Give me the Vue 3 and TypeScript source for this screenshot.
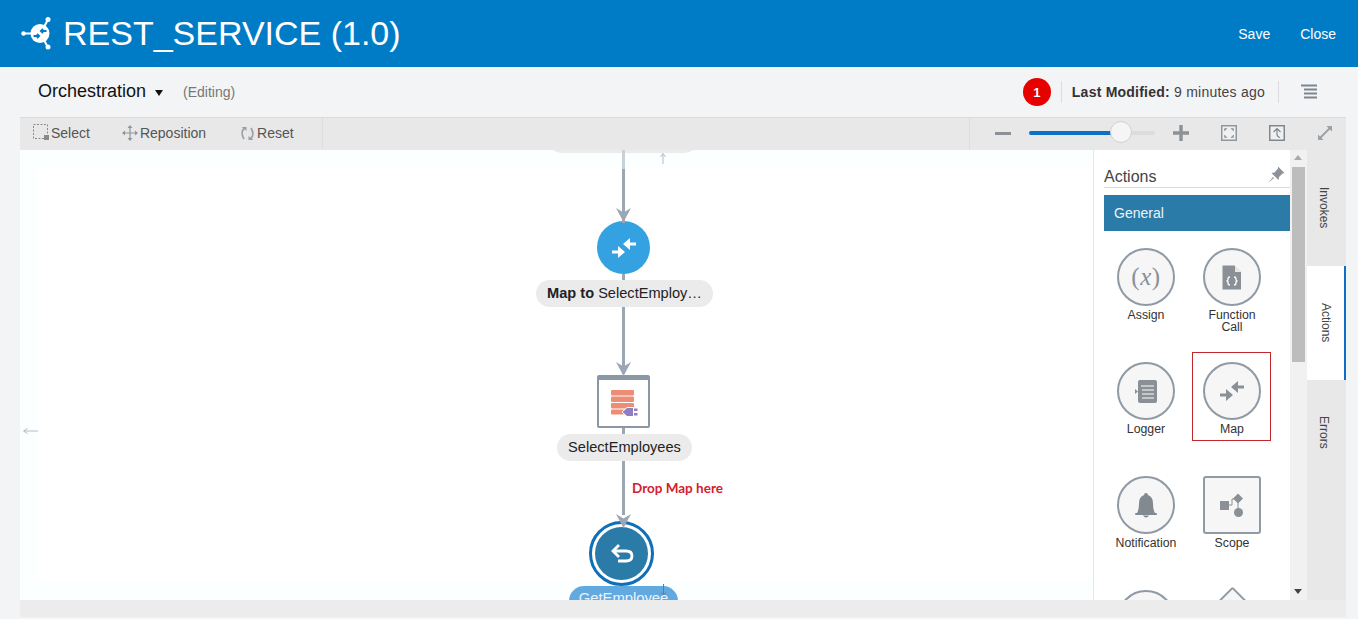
<script setup lang="ts">
interface Tool { label: string[]; icon: string; shape?: string; selected?: boolean }
const tools: Tool[] = [
  { label: ['Assign'], icon: 'assign' },
  { label: ['Function', 'Call'], icon: 'func' },
  { label: ['Logger'], icon: 'logger' },
  { label: ['Map'], icon: 'map', selected: true },
  { label: ['Notification'], icon: 'bell' },
  { label: ['Scope'], icon: 'scope', shape: 'square' },
  { label: [], icon: 'none' },
  { label: [], icon: 'none', shape: 'diamond' },
]
const tabs = [
  { name: 'Invokes', active: false },
  { name: 'Actions', active: true },
  { name: 'Errors', active: false },
]
</script>

<template>
  <div class="app">
    <header class="top">
      <div class="brand">
        <svg class="logo" width="34" height="34" viewBox="0 0 34 34">
          <circle cx="3.500" cy="16.500" r="2.200" fill="#fff" />
          <path d="M3 16.500h10M24 10l4-7.500M24 23l4 7.500" stroke="#fff" stroke-width="2" fill="none" />
          <circle cx="28" cy="2.500" r="2.500" fill="#fff" />
          <circle cx="28" cy="30" r="2.500" fill="#fff" />
          <circle cx="20" cy="16.500" r="9.500" fill="#fff" />
          <path d="M13.500 19h5.500M17 16.800l2.200 2.200-2.200 2.200M26.500 14H21M23 11.800L20.800 14l2.200 2.200" stroke="#007cc7" stroke-width="1.800" fill="none" />
        </svg>
        <span class="title">REST_SERVICE (1.0)</span>
      </div>
      <nav class="top-actions"><a>Save</a><a>Close</a></nav>
    </header>

    <div class="subbar">
      <div class="sub-left">
        <span class="mode">Orchestration</span>
        <span class="caret"></span>
        <span class="editing">(Editing)</span>
      </div>
      <div class="sub-right">
        <span class="badge">1</span>
        <span class="modified"><b>Last Modified:</b> 9 minutes ago</span>
        <svg class="menu" width="18" height="16" viewBox="0 0 18 16">
          <path d="M1 1.500h16M4 5.500h13M4 9.500h13M4 13.500h13" stroke="#7d868e" stroke-width="1.800" />
        </svg>
      </div>
    </div>

    <div class="workspace">
      <div class="toolbar">
        <div class="tools-left">
          <span class="tbtn select">
            <svg width="18" height="18" viewBox="0 0 18 18">
              <rect x="0.500" y="0.500" width="14" height="14" fill="none" stroke="#8a8a8a" stroke-dasharray="2 1.500" />
              <rect x="11" y="11" width="5" height="5" fill="#8a8a8a" />
            </svg>Select</span>
          <span class="tbtn repos">
            <svg width="16" height="16" viewBox="0 0 16 16">
              <path d="M8 1v14M1 8h14" stroke="#8c959d" stroke-width="1.200" />
              <path d="M8 0l2.500 3h-5zM8 16l2.500-3h-5zM0 8l3-2.500v5zM16 8l-3-2.500v5z" fill="#8c959d" />
            </svg>Reposition</span>
          <span class="tbtn reset">
            <svg width="15" height="15" viewBox="0 0 15 15">
              <path d="M4.500 2C1.500 4.500 1.500 9 4 13M10.500 13c3-2.500 3-7 .5-11" fill="none" stroke="#99a1a8" stroke-width="1.800" />
              <path d="M1.500 1h5v4zM13.500 14h-5v-4z" fill="#99a1a8" />
            </svg>Reset</span>
        </div>
        <div class="tools-right">
          <span class="minus"></span>
          <div class="slider"><span class="fill"></span><span class="thumb"></span></div>
          <svg class="plus" width="16" height="16" viewBox="0 0 16 16">
            <path d="M8 0v16M0 8h16" stroke="#8b9197" stroke-width="3.400" />
          </svg>
          <svg class="tico fit" width="16" height="16" viewBox="0 0 16 16">
            <rect x="0.750" y="0.750" width="14.500" height="14.500" fill="#f0f0f0" stroke="#8f979e" stroke-width="1.500" />
            <path d="M3.500 3.500h2.500L3.500 6zM12.500 3.500H10L12.500 6zM3.500 12.500h2.500L3.500 10zM12.500 12.500H10L12.500 10z" fill="#8f979e" stroke="#8f979e" stroke-width=".6" />
          </svg>
          <svg class="tico up" width="16" height="16" viewBox="0 0 16 16">
            <rect x="0.750" y="0.750" width="14.500" height="14.500" fill="#f0f0f0" stroke="#80888f" stroke-width="1.500" />
            <path d="M8 3.500L4.500 7M8 3.500L11.500 7M8 3.500V9q0 3 3 3.500" fill="none" stroke="#80888f" stroke-width="1.200" />
          </svg>
          <svg class="tico expand" width="16" height="16" viewBox="0 0 16 16">
            <path d="M3 13l10-10" stroke="#9aa1a7" stroke-width="2" />
            <path d="M9.500 1h5.500v5.500zM1 9.500V15h5.500z" fill="#9aa1a7" />
          </svg>
        </div>
      </div>

      <div class="main">
        <div class="canvas">
          <div class="tint"></div>
          <svg class="edges" width="1073" height="450" viewBox="0 0 1073 450">
            <path d="M603.500 0v19" stroke="#c9d0d6" stroke-width="3" />
            <path d="M603.500 19v54M603.500 124v6M603.500 157v67M603.500 278v6M603.500 311v54" stroke="#9ba7b3" stroke-width="3" fill="none" />
            <path d="M596 58l7.500 4.500L611 58l-7.500 14z" fill="#9ba7b3" />
            <path d="M596 212l7.500 4.500L611 212l-7.500 14z" fill="#9ba7b3" />
            <path d="M596 364l7.500 4.500L611 364l-7.500 14z" fill="#9ba7b3" />
            <path d="M643 14V4M640.500 7L643 3.500 645.500 7" stroke="#b5bcc2" fill="none" />
            <path d="M18 281H4M7.500 278.500L3.500 281 7.500 283.500" stroke="#b5bcc2" fill="none" />
          </svg>

          <div class="pill first"></div>

          <div class="node map-node">
            <svg width="26" height="26" viewBox="0 0 26 26">
              <path d="M1 15.500h7v3H1zM7 11l7 6-7 6z" fill="#fff" />
              <path d="M25 7.500h-7v3h7zM19 3l-7 6 7 6z" fill="#fff" />
            </svg>
          </div>
          <div class="pill map-pill"><b>Map to</b> SelectEmploy…</div>

          <div class="db-node">
            <svg width="32" height="30" viewBox="0 0 32 30">
              <rect x="3" y="1" width="23" height="5.500" rx="1" fill="#ec8e76" />
              <rect x="3" y="7.500" width="23" height="5.500" rx="1" fill="#ec8e76" />
              <rect x="3" y="14" width="23" height="5.500" rx="1" fill="#ec8e76" />
              <rect x="3" y="20.500" width="13" height="5" rx="1" fill="#ec8e76" />
              <path d="M14 23l5-4.500h6.500v9H19z" fill="#8f7fc1" stroke="#fff" stroke-width="1" />
              <rect x="26" y="19.500" width="3.500" height="2.500" fill="#8f7fc1" />
              <rect x="26" y="24" width="3.500" height="2.500" fill="#8f7fc1" />
            </svg>
          </div>
          <div class="pill select-pill">SelectEmployees</div>

          <div class="drop">Drop Map here</div>

          <div class="return-ring">
            <div class="return-node">
              <svg width="24" height="20" viewBox="0 0 24 20">
                <path d="M3 7h13q6 0 6 5t-6 5H8" fill="none" stroke="#fff" stroke-width="2.800" />
                <path d="M9 1L3 7l6 6" fill="none" stroke="#fff" stroke-width="2.800" />
              </svg>
            </div>
          </div>
          <div class="pill get-pill">GetEmployee</div>
          <svg class="down" width="7" height="12" viewBox="0 0 7 12">
            <path d="M3.500 0v11M1 8.500L3.500 11 6 8.500" fill="none" stroke="#5d7c9b" />
          </svg>
        </div>

        <aside class="panel">
          <div class="panel-head">
            <span>Actions</span>
            <svg width="17" height="17" viewBox="0 0 17 17">
              <path d="M10 0.500l6.500 6.500-2 .5-3.500 3.500-.5 3-7-7 3-.5L10 2.500z" fill="#8c9298" />
              <path d="M5 11l-4.500 5.500L6 12z" fill="#8c9298" />
            </svg>
          </div>
          <div class="general">General</div>
          <div class="grid">
            <div v-for="t in tools" :key="t.icon + t.label.join() + t.shape" class="tool" :class="{ selected: t.selected }">
              <div class="shape" :class="t.shape || 'circle'">
                <span v-if="t.icon === 'assign'" class="assign">(<i>x</i>)</span>
                <svg v-else-if="t.icon === 'func'" width="20" height="25" viewBox="0 0 20 25">
                  <path d="M.5.500h12l6.500 6.500v17.500H.5z" fill="#8a9096" />
                  <path d="M13 .5v6.500h6.500z" fill="#e6e6e6" />
                  <path d="M8 12q-2 0-2 2v1l-1 1 1 1v1q0 2 2 2M12 12q2 0 2 2v1l1 1-1 1v1q0 2-2 2" fill="none" stroke="#fff" stroke-width="1.300" />
                </svg>
                <svg v-else-if="t.icon === 'logger'" width="22" height="23" viewBox="0 0 22 23">
                  <rect x="3" y="0" width="19" height="23" rx="2" fill="#8a9096" />
                  <path d="M6 6h13M7 10h12M7 14h12M7 18h12" stroke="#fff" stroke-width="1.200" />
                  <path d="M0 9l3 2.500L0 14z" fill="#8a9096" />
                </svg>
                <svg v-else-if="t.icon === 'map'" width="26" height="26" viewBox="0 0 26 26">
                  <path d="M1 15.500h7v3H1zM7 11l7 6-7 6z" fill="#8a9096" />
                  <path d="M25 7.500h-7v3h7zM19 3l-7 6 7 6z" fill="#8a9096" />
                </svg>
                <svg v-else-if="t.icon === 'bell'" width="22" height="25" viewBox="0 0 22 25">
                  <path d="M11 0q2 0 2 2 5 2 5 8 0 7 2 10H2q2-3 2-10 0-6 5-8 0-2 2-2z" fill="#828a91" />
                  <rect x="0" y="20" width="22" height="2" rx="1" fill="#828a91" />
                  <path d="M8 22.500h6q-1 2-3 2t-3-2z" fill="#828a91" />
                </svg>
                <svg v-else-if="t.icon === 'scope'" width="25" height="25" viewBox="0 0 25 25">
                  <rect x="0" y="8" width="9" height="9" fill="#8a9096" />
                  <path d="M9 12h3V6h6M18 8v10" fill="none" stroke="#8a9096" stroke-width="1" />
                  <path d="M18 0.500l5 5-5 5-5-5z" fill="#8a9096" />
                  <circle cx="18.500" cy="19.500" r="4.500" fill="#8a9096" />
                </svg>
              </div>
              <div class="lbl"><div v-for="l in t.label" :key="l">{{ l }}</div></div>
            </div>
          </div>
        </aside>

        <div class="scroll">
          <span class="s-up"></span>
          <span class="s-thumb"></span>
          <span class="s-down"></span>
        </div>

        <div class="tabs">
          <div v-for="t in tabs" :key="t.name" class="tab" :class="[{ active: t.active }, 'tab-' + t.name.toLowerCase()]">
            <span>{{ t.name }}</span>
          </div>
        </div>
      </div>
      <div class="bottom"></div>
    </div>
  </div>
</template>

<style scoped>
.app { width: 1358px; height: 619px; overflow: hidden; background: #f3f4f6; font-family: "Liberation Sans", Arial, sans-serif; display: flex; flex-direction: column; color: #222; }
.top { height: 67px; flex: none; background: #007cc7; display: flex; justify-content: space-between; align-items: center; padding: 0 22px 0 20px; color: #fff; }
.brand { display: flex; align-items: center; gap: 9px; }
.title { font-size: 34px; }
.top-actions { display: flex; gap: 30px; font-size: 14px; }

.subbar { height: 50px; box-sizing: border-box; flex: none; display: flex; justify-content: space-between; align-items: center; padding: 0 40px 2px 38px; }
.sub-left { display: flex; align-items: center; }
.mode { font-size: 18px; color: #111; }
.caret { width: 0; height: 0; margin: 3px 0 0 9px; border-left: 4.500px solid transparent; border-right: 4.500px solid transparent; border-top: 6px solid #111; }
.editing { margin-left: 20px; font-size: 14px; color: #777; margin-top: 2px; }
.sub-right { display: flex; align-items: center; margin-top: 2px; }
.badge { width: 28px; height: 28px; border-radius: 50%; background: #e60000; color: #fff; font-size: 13px; font-weight: bold; display: flex; align-items: center; justify-content: center; }
.modified { margin-left: 10px; padding-left: 10px; border-left: 1px solid #dcdcdc; font-size: 14px; line-height: 22px; color: #444; padding-right: 13px; border-right: 1px solid #dcdcdc; letter-spacing: 0.23px; }
.modified b { color: #333; }
.menu { margin-left: 21px; }

.workspace { margin-left: 20px; width: 1326px; display: flex; flex-direction: column; }
.toolbar { height: 33px; flex: none; box-sizing: border-box; border-top: 1px solid #dcdbd6; background: #e8e8e8; display: flex; justify-content: space-between; align-items: center; }
.tools-left { display: flex; align-items: center; height: 100%; box-sizing: border-box; padding-bottom: 2px; width: 303px; border-right: 1px solid #dedede; }
.tbtn { display: inline-flex; align-items: center; font-size: 14px; color: #555; }
.select { margin-left: 13px; }
.repos { margin-left: 32px; }
.repos svg { margin-right: 2px; }
.reset { margin-left: 34px; }
.reset svg { margin-right: 2px; }
.tools-right { display: flex; align-items: center; height: 100%; padding-bottom: 2px; width: 377px; border-left: 1px solid #dedede; box-sizing: border-box; }
.minus { width: 16px; height: 3px; background: #8b9197; margin-left: 25px; }
.slider { position: relative; width: 126px; height: 4px; border-radius: 2px; background: #dcdcdc; margin-left: 18px; }
.fill { position: absolute; left: 0; top: 0; height: 4px; width: 84px; background: #0f6fc6; border-radius: 2px; }
.thumb { position: absolute; left: 81px; top: -10px; width: 22px; height: 22px; border-radius: 50%; background: #f5f5f5; border: 1px solid #d0d0d0; box-sizing: border-box; }
.plus { margin-left: 18px; }
.fit { margin-left: 32px; }
.up { margin-left: 32px; }
.expand { margin-left: 32px; }

.main { height: 450px; flex: none; display: flex; }
.canvas { width: 1073px; flex: none; position: relative; background: #fff; overflow: hidden; }
.tint { position: absolute; inset: 0; box-sizing: border-box; border: 18px solid #fbffff; border-right-width: 0; }
.edges { position: absolute; left: 0; top: 0; z-index: 1; }
.pill { position: absolute; background: #ebebeb; border-radius: 14px; font-size: 14px; display: flex; align-items: center; justify-content: center; padding-bottom: 2px; color: #222; white-space: pre; box-sizing: border-box; height: 27px; }
.first { left: 528px; top: -24px; width: 150px; }
.map-pill { left: 516px; top: 130px; width: 177px; font-size: 14.600px; }
.select-pill { left: 537px; top: 284px; width: 135px; font-size: 14.600px; }
.get-pill { left: 549px; top: 436px; width: 109px; height: 30px; background: #62a9e0; color: #eaf4fb; align-items: flex-start; padding-top: 4px; font-size: 14.800px; border-radius: 15px; }
.node { position: absolute; display: flex; align-items: center; justify-content: center; }
.map-node { left: 577px; top: 71px; width: 53px; height: 53px; border-radius: 50%; background: #34a2e0; }
.db-node { position: absolute; left: 577px; top: 225px; width: 53px; height: 53px; box-sizing: border-box; border: 2px solid #8b97a3; border-top-width: 5px; border-radius: 2px; background: #fff; display: flex; align-items: center; justify-content: center; padding-top: 2px; }
.drop { position: absolute; left: 612px; top: 330px; font: bold 13.500px Lato, sans-serif; color: #d3202e; }
.return-ring { position: absolute; left: 569px; top: 371px; width: 65px; height: 65px; box-sizing: border-box; border: 3px solid #0f6fb8; border-radius: 50%; background: #fff; display: flex; align-items: center; justify-content: center; }
.return-node { width: 53px; height: 53px; flex: none; border-radius: 50%; background: #2a7ba8; display: flex; align-items: center; justify-content: center; }
.down { position: absolute; left: 640px; top: 434px; }

.panel { width: 197px; flex: none; box-sizing: border-box; background: #fff; border-left: 1px solid #e6e6e6; padding-left: 10px; overflow: hidden; }
.panel-head { height: 38px; box-sizing: border-box; border-bottom: 1px solid #d9d9d9; display: flex; justify-content: space-between; align-items: flex-end; font-size: 16px; color: #444; padding: 0 5px 1px 0; }
.panel-head svg { margin-bottom: 3px; }
.general { margin-top: 7px; height: 36px; background: #2a7ba8; color: #eaf4fb; font-size: 14px; display: flex; align-items: center; padding-left: 10px; }
.grid { display: grid; grid-template-columns: 86px 86px; grid-auto-rows: 114px; margin-top: 17px; margin-left: -1px; }
.tool { display: flex; flex-direction: column; align-items: center; box-sizing: border-box; position: relative; }
.tool.selected::before { content: ""; position: absolute; left: 3px; top: -10px; width: 79px; height: 89px; border: 1px solid #c0272d; box-sizing: border-box; }
.shape { width: 58px; height: 58px; box-sizing: border-box; border: 2px solid #8f9aa5; background: #f6f6f6; display: flex; align-items: center; justify-content: center; flex: none; }
.circle { border-radius: 50%; }
.square { border-radius: 3px; }
.diamond { width: 41px; height: 41px; transform: rotate(45deg); margin-top: 5px; border-radius: 2px; }
.assign { font: 25px "Liberation Serif", serif; color: #8a9096; letter-spacing: 0.5px; }
.lbl { margin-top: 3px; font-size: 12.300px; line-height: 12px; text-align: center; color: #333; }

.scroll { width: 17px; flex: none; background: #f1f1f1; position: relative; }
.s-up { position: absolute; left: 4px; top: 5px; border-left: 4px solid transparent; border-right: 4px solid transparent; border-bottom: 5px solid #aaa; }
.s-thumb { position: absolute; left: 2px; top: 17px; width: 13px; height: 195px; background: #bdbdbd; }
.s-down { position: absolute; left: 4px; bottom: 6px; border-left: 4px solid transparent; border-right: 4px solid transparent; border-top: 5px solid #444; }

.tabs { width: 39px; flex: none; background: #e8e8e8; padding-top: 2px; box-sizing: border-box; }
.tab { height: 114px; display: flex; align-items: center; justify-content: center; box-sizing: border-box; padding-right: 5px; font-size: 12px; color: #444; }
.tab span { writing-mode: vertical-rl; }
.tab-invokes span { margin-bottom: 2px; }
.tab-errors span { margin-bottom: 9px; }
.tab.active { background: #fff; border-right: 2px solid #0f6fc6; padding-right: 0; }
.bottom { height: 17px; background: #ececec; flex: none; }
</style>
